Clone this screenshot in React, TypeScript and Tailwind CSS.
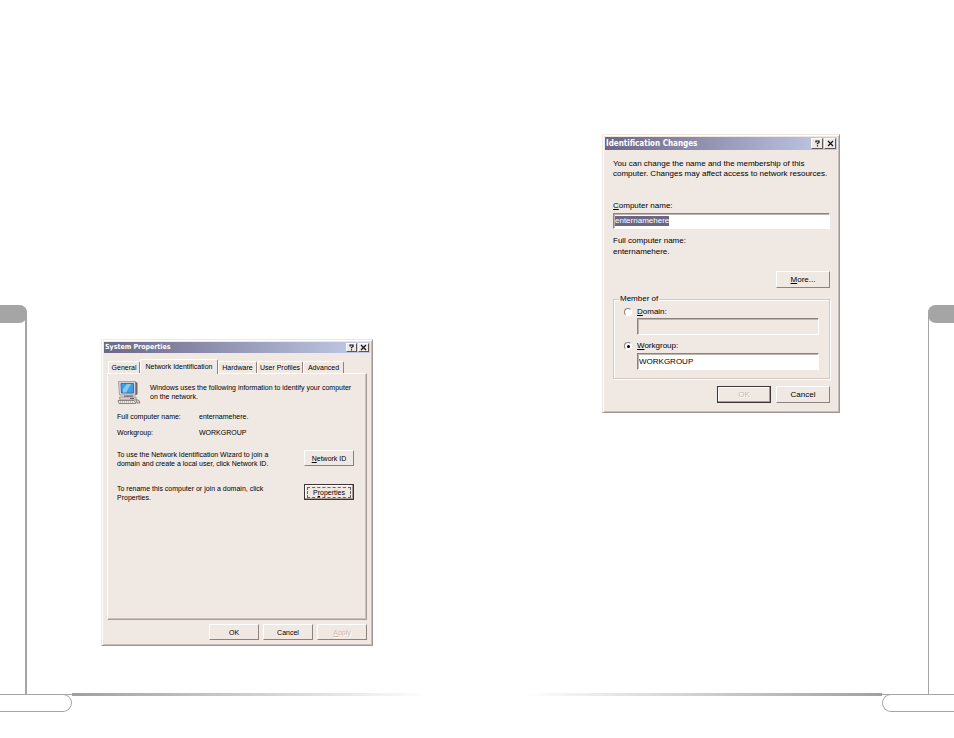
import type { ButtonHTMLAttributes, ReactNode } from 'react';
import { clsx } from 'clsx';

interface DialogProps {
  title: string;
  large?: boolean;
  children: ReactNode;
}

interface ButtonProps extends ButtonHTMLAttributes<HTMLButtonElement> {
  large?: boolean;
  isDefault?: boolean;
}

const tabs = ['General', 'Network Identification', 'Hardware', 'User Profiles', 'Advanced'];
const tabWidths = ['w-[32px]', 'w-[78px]', 'w-[39px]', 'w-[46px]', 'w-[41px]'];

function HelpIcon() {
  return (
    <svg viewBox="0 0 7 7" className="size-[7px]" fill="none" stroke="#111" strokeWidth="1.2">
      <path d="M2 2.4V1h3v1.7L3.500 3.300v1M3.500 5.300v1.200" />
    </svg>
  );
}

function CloseIcon() {
  return (
    <svg viewBox="0 0 7 7" className="size-[7px]" fill="none" stroke="#111" strokeWidth="1.2">
      <path d="M1 1l5 5M6 1L1 6" />
    </svg>
  );
}

function ComputerIcon() {
  return (
    <svg viewBox="0 0 24 24" className="size-6 shrink-0">
      <path d="M1.500 1.500h17v13.500h-16z" fill="#d6d2dc" stroke="#a9a3ae" />
      <path d="M18.500 1.500l2 1.500v11l-2 1.500z" fill="#6d6668" />
      <path d="M4 3.500h12.500v9.500H4.500z" fill="#3f9fe0" stroke="#3c6eb0" />
      <path d="M10 4h4l-5 8.500H6V9z" fill="#86cbf2" />
      <path d="M7 15.500h9v2H7z" fill="#6c6568" />
      <path d="M2.500 17h16.500v3H3z" fill="#d8d0cb" stroke="#a09894" />
      <path d="M13 18.500h4" stroke="#5d5558" />
      <path d="M1 20.500h16l2 3H2z" fill="#eee9e5" stroke="#8d8580" />
      <path d="M3 22h13" stroke="#9a928e" strokeDasharray="1 1" />
      <path d="M19 19.500l3 1 1 2.500h-3z" fill="#d9d1cd" stroke="#8d8580" />
    </svg>
  );
}

function Button({ large, isDefault, className, children, ...rest }: ButtonProps) {
  return (
    <button
      type="button"
      className={clsx(
        'flex shrink-0 items-center justify-center border bg-[#f0e8e3] leading-none',
        large ? 'h-[17px] w-[54px]' : 'h-4 w-[50px]',
        isDefault
          ? 'border-[#3c3435] shadow-[inset_-1px_-1px_0_#a89c99,inset_1px_1px_0_#ffffff]'
          : 'border-t-white border-r-[#8d8280] border-b-[#8d8280] border-l-white',
        rest.disabled && 'text-[#c6b9b5] [text-shadow:1px_1px_0_#ffffff]',
        className,
      )}
      {...rest}
    >
      {children}
    </button>
  );
}

function Dialog({ title, large, children }: DialogProps) {
  const caption = clsx(
    'flex items-center justify-center border border-t-white border-r-[#5d5557] border-b-[#5d5557] border-l-white bg-[#f0e8e3]',
    large ? 'h-[11px] w-3' : 'h-[9px] w-[11px]',
  );

  return (
    <section
      aria-label={title}
      className={clsx(
        'border border-t-[#f0e8e3] border-r-[#a3958f] border-b-[#a3958f] border-l-[#f0e8e3] bg-[#f0e8e3] p-px text-black shadow-[inset_1px_1px_0_#ffffff,inset_-1px_-1px_0_#c9bdb8]',
        large ? 'w-[238px] text-[8px]' : 'w-[272px] text-[7px]',
      )}
    >
      <header
        className={clsx(
          'mx-px mt-px flex items-center justify-between bg-linear-to-r from-[#6c6886] to-[#c3cdeb] px-px',
          large ? 'h-[13px]' : 'h-[11px]',
        )}
      >
        <h2
          className={clsx(
            "font-['DejaVu_Sans_Condensed','DejaVu_Sans',sans-serif] leading-none font-bold whitespace-nowrap text-white",
            large ? 'text-[8px]' : 'text-[7px]',
          )}
        >
          {title}
        </h2>
        <div className="flex gap-px">
          <button type="button" aria-label="Help" className={caption}><HelpIcon /></button>
          <button type="button" aria-label="Close" className={caption}><CloseIcon /></button>
        </div>
      </header>
      {children}
    </section>
  );
}

function SystemProperties() {
  return (
    <Dialog title="System Properties">
      <div className="px-1 pt-[6px] pb-1 font-['Liberation_Sans',sans-serif] leading-[9px]">
        <div role="tablist" className="flex items-end pl-px">
          {tabs.map((tab, i) => (
            <button
              key={tab}
              type="button"
              role="tab"
              aria-selected={i === 1}
              className={clsx(
                'rounded-t-xs border border-t-white border-r-[#8d8280] border-b-0 border-l-white text-center whitespace-nowrap',
                tabWidths[i],
                i === 1 ? 'relative z-10 -mb-px h-[15px] bg-[#f0e8e3] pb-[2px]' : 'h-3',
              )}
            >
              {tab}
            </button>
          ))}
        </div>

        <div role="tabpanel" className="h-[247px] border border-t-white border-r-[#a89c99] border-b-[#a89c99] border-l-white px-[9px] pt-[6px] shadow-[inset_-1px_-1px_0_#cdc1bd]">
          <div className="flex gap-[9px]">
            <ComputerIcon />
            <p className="pt-[3px] whitespace-nowrap">
              Windows uses the following information to identify your computer<br />
              on the network.
            </p>
          </div>

          <dl className="mt-2 grid grid-cols-[82px_1fr] gap-y-[7px]">
            <dt>Full computer name:</dt>
            <dd>enternamehere.</dd>
            <dt>Workgroup:</dt>
            <dd>WORKGROUP</dd>
          </dl>

          <div className="mt-[13px] flex justify-between pr-[3px]">
            <p>
              To use the Network Identification Wizard to join a<br />
              domain and create a local user, click Network ID.
            </p>
            <Button><span><u>N</u>etwork ID</span></Button>
          </div>

          <div className="mt-4 flex justify-between pr-[3px]">
            <p>
              To rename this computer or join a domain, click<br />
              Properties.
            </p>
            <Button isDefault>
              <span className="border border-dashed border-[#6b6264] px-[5px] py-px">P<u>r</u>operties</span>
            </Button>
          </div>
        </div>

        <footer className="mt-1 flex justify-end gap-1">
          <Button>OK</Button>
          <Button>Cancel</Button>
          <Button disabled><span><u>A</u>pply</span></Button>
        </footer>
      </div>
    </Dialog>
  );
}

const field = 'block w-full border border-t-[#8d8280] border-r-white border-b-white border-l-[#8d8280] px-px shadow-[inset_1px_1px_0_#c0b4b0]';
const radio = "flex size-2 appearance-none items-center justify-center rounded-full border border-t-[#8d8280] border-r-white border-b-white border-l-[#8d8280] bg-white checked:before:size-[3px] checked:before:rounded-full checked:before:bg-black checked:before:content-['']";

function IdentificationChanges() {
  return (
    <Dialog title="Identification Changes" large>
      <form className="pt-[9px] pr-2 pb-2 pl-[9px] font-['Liberation_Sans',sans-serif] leading-[10px]">
        <p className="whitespace-nowrap">
          You can change the name and the membership of this<br />
          computer. Changes may affect access to network resources.
        </p>

        <label htmlFor="computer-name" className="mt-[22px] block"><u>C</u>omputer name:</label>
        <div className={clsx(field, 'mt-[2px] flex h-4 items-center bg-white')}>
          <input id="computer-name" defaultValue="enternamehere" className="field-sizing-content h-[10px] bg-[#6b6785] text-white outline-none" />
        </div>

        <p className="mt-[7px]">Full computer name:</p>
        <p className="mt-px">enternamehere.</p>

        <div className="mt-[14px] flex justify-end">
          <Button large><span><u>M</u>ore...</span></Button>
        </div>

        <fieldset className="mt-[6px] border border-[#d3c8c4] px-[10px] pb-2 shadow-[1px_1px_0_#ffffff,inset_1px_1px_0_#ffffff]">
          <legend className="-ml-[5px] px-px">Member of</legend>
          <div className="grid grid-cols-[13px_1fr] items-center pt-[3px]">
            <input id="domain" type="radio" name="member" className={radio} />
            <label htmlFor="domain"><u>D</u>omain:</label>
            <input aria-label="Domain name" disabled className={clsx(field, 'col-start-2 mt-px h-[17px]')} />
            <input id="workgroup" type="radio" name="member" defaultChecked className={clsx(radio, 'mt-[6px]')} />
            <label htmlFor="workgroup" className="mt-[6px]"><u>W</u>orkgroup:</label>
            <input aria-label="Workgroup name" defaultValue="WORKGROUP" className={clsx(field, 'col-start-2 mt-[2px] h-[17px] bg-white')} />
          </div>
        </fieldset>

        <footer className="mt-[7px] flex justify-end gap-[5px]">
          <Button large isDefault disabled>OK</Button>
          <Button large>Cancel</Button>
        </footer>
      </form>
    </Dialog>
  );
}

export default function App() {
  return (
    <main className="grid min-h-screen grid-cols-2 bg-white">
      {/* Left page */}
      <div className="flex flex-col pb-[26px]">
        <div className="flex flex-1">
          <div className="flex w-[27px] shrink-0 flex-col pt-[305px]">
            <div className="flex-1 rounded-tr-lg border-r-2 border-[#a5a5a5]">
              <div className="-mr-[2px] h-[18px] rounded-r-lg bg-[#a5a5a5]" />
            </div>
          </div>
          <div className="pt-[339px] pl-[74px]">
            <SystemProperties />
          </div>
        </div>
        <div className="flex">
          <div className="w-[72px] border-t border-[#a5a5a5]">
            <div className="-mt-px h-[18px] rounded-r-[9px] border border-l-0 border-[#a5a5a5]" />
          </div>
          <div className="-mt-px mr-[47px] h-[3px] flex-1 bg-linear-to-r from-[#a0a0a0] to-white" />
        </div>
      </div>

      {/* Right page */}
      <div className="flex flex-col pb-[26px]">
        <div className="flex flex-1 justify-between">
          <div className="pt-[134px] pl-[125px]">
            <IdentificationChanges />
          </div>
          <div className="flex w-[26px] shrink-0 flex-col pt-[305px]">
            <div className="flex-1 rounded-tl-lg border-l border-[#a5a5a5]">
              <div className="-ml-px h-[18px] rounded-l-lg bg-[#a5a5a5]" />
            </div>
          </div>
        </div>
        <div className="flex">
          <div className="-mt-px ml-[47px] h-[3px] flex-1 bg-linear-to-l from-[#a0a0a0] to-white" />
          <div className="w-[72px] border-t border-[#a5a5a5]">
            <div className="-mt-px h-[18px] rounded-l-[9px] border border-r-0 border-[#a5a5a5]" />
          </div>
        </div>
      </div>
    </main>
  );
}
